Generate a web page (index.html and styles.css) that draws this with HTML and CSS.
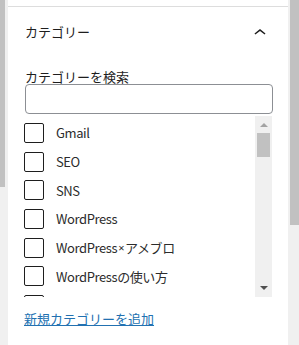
FILE: index.html
```html
<!DOCTYPE html>
<html lang="ja">
<head>
	<meta charset="utf-8" />
	<title>カテゴリー</title>
	<link rel="stylesheet" href="styles.css">
</head>
<body>
<div class="frame">
	<div class="side side-left"><div class="side-thumb"></div></div>

	<div class="panel">
		<div class="panel-head">
			<h2>カテゴリー</h2>
			<svg class="chevron" width="24" height="24" viewBox="0 0 24 24"><path d="M6.5 12.4L12 8l5.5 4.4-.9 1.2L12 10l-4.6 3.6-1-1.2z"/></svg>
		</div>

		<div class="panel-body">
			<label class="search-label" for="catsearch">カテゴリーを検索</label>
			<input id="catsearch" class="search-input" type="text" />

			<div class="cat-box">
				<ul class="cat-list">
					<li><span class="check"></span>Gmail</li>
					<li><span class="check"></span>SEO</li>
					<li><span class="check"></span>SNS</li>
					<li><span class="check"></span>WordPress</li>
					<li><span class="check"></span>WordPress<span class="times">×</span>アメブロ</li>
					<li><span class="check"></span>WordPressの使い方</li>
					<li><span class="check"></span></li>
				</ul>
				<div class="fake-scroll">
					<span class="arrow up"></span>
					<span class="thumb"></span>
					<span class="arrow down"></span>
				</div>
			</div>

			<a class="add-link" href="#">新規カテゴリーを追加</a>
		</div>
	</div>

	<div class="side side-right"><div class="side-thumb"></div></div>
</div>
</body>
</html>
```

FILE: styles.css
```css
*{
	font-family: "Noto Sans CJK JP", "Noto Sans", sans-serif;
}

body{
	margin: 0;
	background: #f0f0f0;
}

.frame{
	display: flex;
	height: 345px;
	overflow: hidden;
}

.side{
	background: #f0f0f0;
}

.side-left{
	width: 8px;
}

.side-left .side-thumb{
	width: 5px;
	height: 187px;
	background: #c1c1c1;
}

.side-right{
	width: 11px;
}

.side-right .side-thumb{
	width: 9px;
	height: 225px;
	margin-left: 2px;
	background: #c1c1c1;
}

.panel{
	width: 280px;
	background: #fff;
	color: #1e1e1e;
	font-size: 13px;
}

.panel-head{
	margin-top: 6px;
	border-top: 1px solid #dddddd;
	height: 50px;
	display: flex;
	align-items: center;
	justify-content: space-between;
	padding: 0 15px 0 17px;
}

.panel-head h2{
	margin: 0;
	font-size: 13px;
	font-weight: normal;
	line-height: 16px;
}

.chevron{
	fill: #1e1e1e;
	margin-top: 2px;
	margin-right: 1px;
}

.panel-body{
	padding: 0 15px 0 17px;
}

.search-label{
	display: block;
	margin-top: 12px;
	line-height: 15px;
}

.search-input{
	display: block;
	box-sizing: border-box;
	width: 100%;
	height: 30px;
	margin: 0;
	border: 1px solid #8c8f94;
	border-radius: 4px;
	background: #fff;
}

.cat-box{
	display: flex;
	height: 181px;
	margin: 2px 0 0 -1px;
	width: 248px;
}

.cat-list{
	flex: 1;
	list-style: none;
	margin: 0;
	padding: 2.67px 0 0 0;
	overflow: hidden;
}

.cat-list li{
	display: flex;
	align-items: center;
	height: 28.67px;
	white-space: nowrap;
	letter-spacing: -0.4px;
	color: #2c2c2c;
}

.times{
	font-family: "Noto Sans", sans-serif;
	font-size: 11px;
	margin: 0 1px;
}

.check{
	box-sizing: border-box;
	width: 20px;
	height: 20px;
	border: 1.5px solid #1e1e1e;
	border-radius: 2px;
	margin-right: 12px;
	flex: none;
}

.fake-scroll{
	width: 17px;
	background: #f0f0f0;
	display: flex;
	flex-direction: column;
	align-items: center;
}

.arrow{
	width: 0;
	height: 0;
	border-left: 4px solid transparent;
	border-right: 4px solid transparent;
}

.arrow.up{
	margin-top: 7px;
	border-bottom: 4px solid #a3a3a3;
}

.arrow.down{
	margin-top: auto;
	margin-bottom: 7px;
	border-top: 4px solid #505050;
}

.thumb{
	width: 13px;
	height: 24px;
	margin-top: 6px;
	background: #c1c1c1;
}

.add-link{
	display: inline-block;
	margin: 14px 0 0 -1px;
	line-height: 16px;
	color: #2271b1;
	text-decoration: underline;
}
```
